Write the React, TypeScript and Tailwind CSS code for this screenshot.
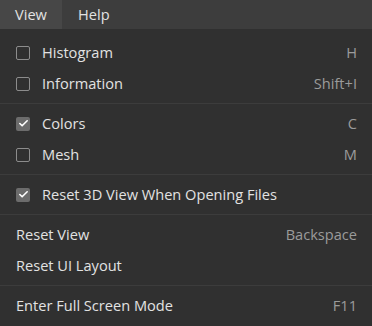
import { Check } from 'lucide-react';

type Item =
  | { kind: 'check'; label: string; checked: boolean; shortcut?: string }
  | { kind: 'action'; label: string; shortcut?: string }
  | { kind: 'sep' };

const items: Item[] = [
  { kind: 'check', label: 'Histogram', checked: false, shortcut: 'H' },
  { kind: 'check', label: 'Information', checked: false, shortcut: 'Shift+I' },
  { kind: 'sep' },
  { kind: 'check', label: 'Colors', checked: true, shortcut: 'C' },
  { kind: 'check', label: 'Mesh', checked: false, shortcut: 'M' },
  { kind: 'sep' },
  { kind: 'check', label: 'Reset 3D View When Opening Files', checked: true },
  { kind: 'sep' },
  { kind: 'action', label: 'Reset View', shortcut: 'Backspace' },
  { kind: 'action', label: 'Reset UI Layout' },
  { kind: 'sep' },
  { kind: 'action', label: 'Enter Full Screen Mode', shortcut: 'F11' },
];

function Box({ checked }: { checked: boolean }) {
  if (checked) {
    return (
      <span className="flex h-[14px] w-[14px] items-center justify-center rounded-[2px] bg-[#6c6c6c]">
        <Check className="h-[11px] w-[11px] text-white" strokeWidth={3.5} />
      </span>
    );
  }
  return <span className="h-[14px] w-[14px] rounded-[2px] border-[1.5px] border-[#8c8c8c]" />;
}

export default function App() {
  return (
    <div className="h-[326px] w-[372px] bg-[#303030] font-['Open_Sans',sans-serif] text-[14.6px] text-[#e2e2e2]">
      {/* Menu bar */}
      <div className="flex h-[29px] bg-[#3d3d3d]">
        <div className="flex w-[62px] items-center bg-[#474747] pl-[15px]">View</div>
        <div className="flex items-center pl-[16px]">Help</div>
      </div>

      {/* Dropdown */}
      <div className="pt-[8px] pb-[5px]">
        {items.map((item, i) => {
          if (item.kind === 'sep') {
            return <div key={i} className="my-[4px] h-px bg-[#3c3c3c]" />;
          }
          return (
            <div key={i} className="flex h-[31px] items-center pl-[16px] pr-[15px]">
              {item.kind === 'check' && (
                <span className="mr-[12px] flex">
                  <Box checked={item.checked} />
                </span>
              )}
              <span className="flex-1">{item.label}</span>
              {item.shortcut && <span className="text-[#9b9b9b]">{item.shortcut}</span>}
            </div>
          );
        })}
      </div>
    </div>
  );
}
